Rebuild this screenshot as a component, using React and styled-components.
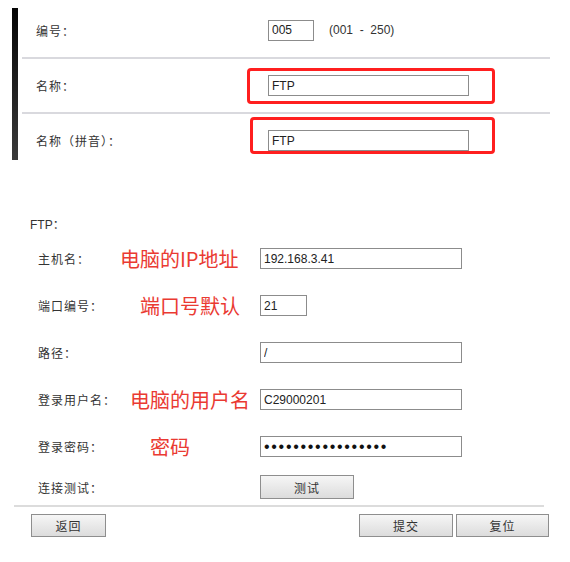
import React from 'react';
import styled, { createGlobalStyle } from 'styled-components';

const GlobalStyle = createGlobalStyle`
  html, body {
    margin: 0;
    padding: 0;
    background: #ffffff;
  }
  body {
    font-family: "Liberation Sans", "Noto Sans CJK SC", sans-serif;
    font-size: 12px;
    color: #333333;
  }
`;

const Page = styled.div`
  width: 570px;
  height: 562px;
  overflow: hidden;
`;

const TopPanel = styled.div`
  display: flex;
  margin: 8px 0 0 12px;
`;

const SideBar = styled.div`
  width: 6px;
  background: linear-gradient(#050505, #3a3a3a);
`;

const TopRows = styled.div`
  width: 528px;
  margin-left: 4px;
`;

const TopRow = styled.div`
  display: flex;
  align-items: center;
  box-sizing: border-box;
  height: ${p => p.$h}px;
  padding-top: ${p => p.$pt || 0}px;
  padding-bottom: ${p => p.$pb || 0}px;
`;

const TopLabel = styled.div`
  width: 232px;
  padding-left: 14px;
  letter-spacing: 1px;
`;

const Divider = styled.div`
  height: 2px;
  background: #d9d9de;
`;

const TextBox = styled.input`
  box-sizing: border-box;
  width: ${p => p.$w}px;
  height: 21px;
  margin: 0;
  padding: 0 3px;
  border: 1px solid #8c8c8c;
  border-radius: 0;
  background: #ffffff;
  font-family: "Liberation Sans", Arial, sans-serif;
  font-size: 12px;
  color: #222222;
  outline: none;

  &[type='password'] {
    font-size: 16px;
    letter-spacing: 1.7px;
    color: #111111;
  }
`;

const Range = styled.span`
  margin-left: 15px;
  white-space: pre;
  color: #333333;
`;

const Highlight = styled.div`
  position: relative;
  display: inline-block;
  line-height: 0;

  &::after {
    content: '';
    position: absolute;
    top: ${p => p.$t}px;
    left: ${p => p.$l}px;
    right: ${p => p.$r}px;
    bottom: ${p => p.$b}px;
    border: 3px solid #ff1f1f;
    border-radius: 4px;
    pointer-events: none;
  }
`;

const FtpPanel = styled.div`
  margin-top: 57px;
`;

const SectionTitle = styled.div`
  padding-left: 30px;
  line-height: 16px;
`;

const FieldGrid = styled.div`
  display: grid;
  grid-template-columns: 82px 140px auto;
  grid-auto-rows: 47px;
  margin-top: 2px;
  padding-left: 38px;
`;

const Field = styled.div`
  display: contents;
`;

const FieldLabel = styled.div`
  align-self: center;
  letter-spacing: 1px;
  white-space: nowrap;
`;

const Note = styled.div`
  align-self: center;
  margin-left: ${p => p.$offset}px;
  font-family: "Noto Sans CJK SC", sans-serif;
  font-size: 20px;
  line-height: 24px;
  color: #ea3a32;
  white-space: nowrap;
`;

const FieldValue = styled.div`
  align-self: center;
  display: flex;
`;

const TestRow = styled.div`
  display: grid;
  grid-template-columns: 222px auto;
  align-items: center;
  height: 34px;
  padding-left: 38px;
  letter-spacing: 1px;
`;

const Button = styled.button`
  box-sizing: border-box;
  width: ${p => p.$w}px;
  height: ${p => p.$h || 23}px;
  margin: 0;
  padding: 0;
  border: 1px solid #8e8e8e;
  border-radius: 0;
  background: linear-gradient(#f6f6f6, #dcdcdc);
  font-family: "Noto Sans CJK SC", sans-serif;
  font-size: 12px;
  color: #333333;
  letter-spacing: 1px;
`;

const BottomDivider = styled.div`
  height: 2px;
  margin: 1px 26px 0 14px;
  background: #dcdcdc;
`;

const ButtonBar = styled.div`
  display: flex;
  justify-content: space-between;
  margin-top: 7px;
  padding: 0 21px 0 31px;
`;

const ButtonGroup = styled.div`
  display: flex;
  gap: 3px;
`;

const fields = [
  { label: '主机名：', note: '电脑的IP地址', offset: 0, value: '192.168.3.41', w: 202 },
  { label: '端口编号：', note: '端口号默认', offset: 20, value: '21', w: 47 },
  { label: '路径：', note: '', offset: 0, value: '/', w: 202 },
  { label: '登录用户名：', note: '电脑的用户名', offset: 10, value: 'C29000201', w: 202 },
  { label: '登录密码：', note: '密码', offset: 30, value: '12345678901234567', w: 202, type: 'password' },
];

export default function App() {
  return (
    <Page>
      <GlobalStyle />
      <TopPanel>
        <SideBar />
        <TopRows>
          <TopRow $h={49} $pb={5}>
            <TopLabel>编号：</TopLabel>
            <TextBox $w={46} defaultValue="005" readOnly />
            <Range>(001  -  250)</Range>
          </TopRow>
          <Divider />
          <TopRow $h={53}>
            <TopLabel>名称：</TopLabel>
            <Highlight $t={-7} $l={-21} $r={-26} $b={-8}>
              <TextBox $w={201} defaultValue="FTP" readOnly />
            </Highlight>
          </TopRow>
          <Divider />
          <TopRow $h={46} $pt={7}>
            <TopLabel>名称（拼音）：</TopLabel>
            <Highlight $t={-13} $l={-18} $r={-26} $b={-3}>
              <TextBox $w={201} defaultValue="FTP" readOnly />
            </Highlight>
          </TopRow>
        </TopRows>
      </TopPanel>

      <FtpPanel>
        <SectionTitle>FTP：</SectionTitle>
        <FieldGrid>
          {fields.map(f => (
            <Field key={f.label}>
              <FieldLabel>{f.label}</FieldLabel>
              <Note $offset={f.offset}>{f.note}</Note>
              <FieldValue>
                <TextBox $w={f.w} type={f.type || 'text'} defaultValue={f.value} readOnly />
              </FieldValue>
            </Field>
          ))}
        </FieldGrid>
        <TestRow>
          <span>连接测试：</span>
          <Button $w={94} $h={24}>测试</Button>
        </TestRow>
        <BottomDivider />
        <ButtonBar>
          <Button $w={75}>返回</Button>
          <ButtonGroup>
            <Button $w={94}>提交</Button>
            <Button $w={93}>复位</Button>
          </ButtonGroup>
        </ButtonBar>
      </FtpPanel>
    </Page>
  );
}
